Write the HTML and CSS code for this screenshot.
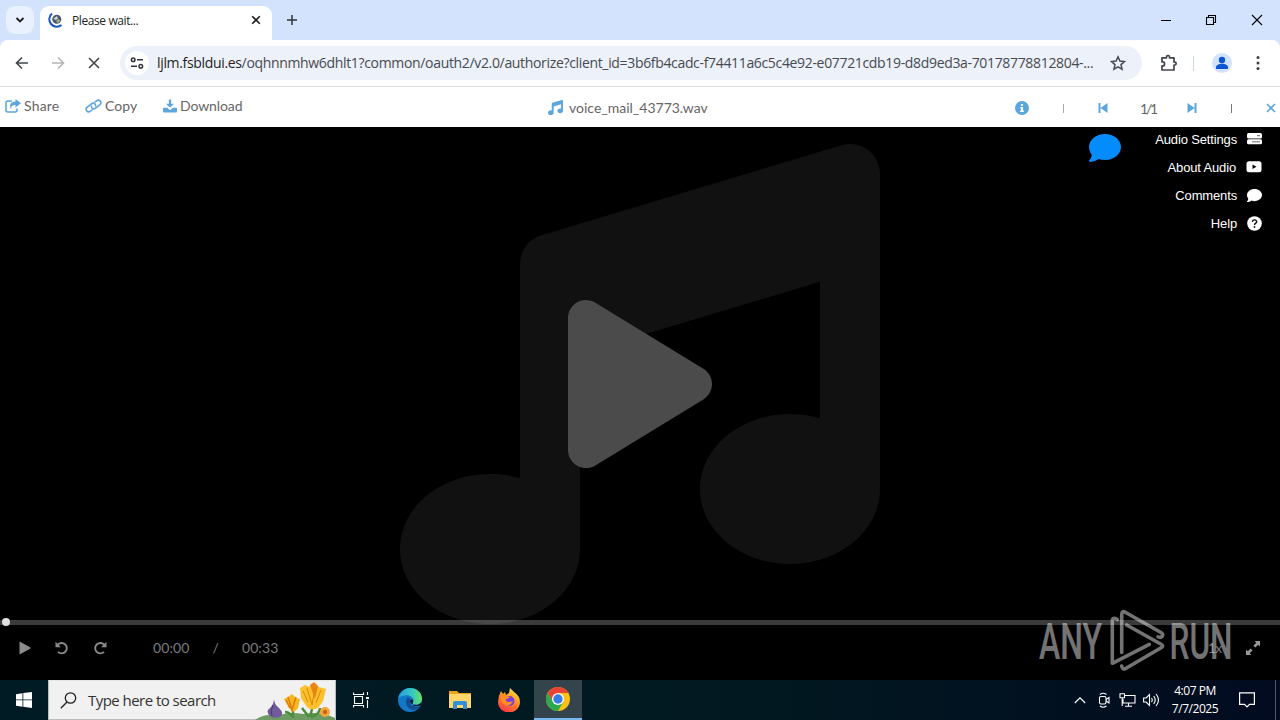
FILE: index.html
```
<!DOCTYPE html>
<html lang="en">
<head>
    <meta charset="UTF-8">
    <meta name="viewport" content="width=device-width, initial-scale=1.0">
    <title>Please wait...</title>
    <link rel="stylesheet" href="styles.css">
</head>
<body>

<div class="tab-strip">
    <div class="tab-search"><svg width="10" height="8" viewBox="0 0 10 8"><path d="M1.5 2 5 5.5 8.5 2" fill="none" stroke="#1f1f1f" stroke-width="1.8"/></svg></div>
    <div class="tab">
        <svg class="favicon" width="16" height="16" viewBox="0 0 16 16">
            <path d="M4 1.500A7 7 0 1 0 13.500 13" fill="none" stroke="#1a56c4" stroke-width="2"/>
            <circle cx="8.800" cy="7.200" r="4.500" fill="#4f5a66"/>
            <path d="M5.500 6.500 9 4l1 3-2.500 1z" fill="#c8d3dc"/>
            <path d="m8 9 3-2 1 2-2 2z" fill="#a8b38e"/>
        </svg>
        <span class="tab-title">Please wait...</span>
        <svg width="10" height="10" viewBox="0 0 10 10"><path d="m1.2 1.2 7.6 7.6m0-7.6L1.2 8.8" stroke="#1f1f1f" stroke-width="1.6"/></svg>
    </div>
    <svg class="new-tab" width="12" height="12" viewBox="0 0 12 12"><path d="M6 1v10M1 6h10" stroke="#30353c" stroke-width="1.5"/></svg>
    <div class="window-buttons">
        <svg width="10" height="12" viewBox="0 0 10 12"><path d="M0 6.5h10" stroke="#000"/></svg>
        <svg width="12" height="12" viewBox="0 0 12 12"><path d="M1.5 3.5h7v7h-7zM3.5 3.5v-2h7v7h-2" fill="none" stroke="#000" stroke-width="1.1"/></svg>
        <svg width="12" height="12" viewBox="0 0 12 12"><path d="m1 1 10 10M11 1 1 11" stroke="#000" stroke-width="1.1"/></svg>
    </div>
</div>

<div class="toolbar">
    <div class="nav">
        <svg width="14" height="14" viewBox="0 0 14 14"><path d="M13 7H2M7 1.5 1.5 7 7 12.5" fill="none" stroke="#41464b" stroke-width="1.6"/></svg>
        <svg width="14" height="14" viewBox="0 0 14 14"><path d="M1 7h11M7 1.5 12.5 7 7 12.5" fill="none" stroke="#b4b6b9" stroke-width="1.6"/></svg>
        <svg width="14" height="14" viewBox="0 0 14 14"><path d="m2 2 10 10M12 2 2 12" stroke="#41464b" stroke-width="1.6"/></svg>
    </div>
    <div class="address">
        <div class="site-info">
            <svg width="14" height="12" viewBox="0 0 14 12" fill="none" stroke="#30343a" stroke-width="1.5"><circle cx="3.2" cy="2.8" r="1.8"/><path d="M7 2.8h6M1 9.2h6"/><circle cx="10.8" cy="9.2" r="1.8"/></svg>
        </div>
        <div class="url"><span class="host">ljlm.fsbldui.es</span>/oqhnnmhw6dhlt1?common/oauth2/v2.0/authorize?client_id=3b6fb4cadc-f74411a6c5c4e92-e07721cdb19-d8d9ed3a-70178778812804-...</div>
        <svg width="16" height="16" viewBox="0 0 16 16"><path d="m8 1.8 1.9 4.3 4.6.4L11 9.600l1.050 4.600L8 11.800l-4.050 2.400L5 9.600 1.500 6.500l4.600-.4z" fill="none" stroke="#474b50" stroke-width="1.5"/></svg>
    </div>
    <svg class="extensions" width="18" height="18" viewBox="0 0 18 18"><path d="M2 3.800h4.500V3a1.500 1.500 0 0 1 3 0v.8H14v4.300h.7a1.400 1.400 0 0 1 0 2.900H14V16H2v-4.100h.6a2 2 0 0 0 0-4H2z" fill="none" stroke="#41464b" stroke-width="1.700" stroke-linejoin="round"/></svg>
    <span class="toolbar-divider"></span>
    <svg class="profile" width="20" height="20" viewBox="0 0 20 20"><circle cx="10" cy="10" r="10" fill="#d3e3fd"/><circle cx="10" cy="7" r="3.200" fill="#0b57d0"/><path d="M4 16v-1.500c0-5 12-5 12 0V16z" fill="#0b57d0"/></svg>
    <svg width="4" height="16" viewBox="0 0 4 16" fill="#3c4043"><circle cx="2" cy="2.500" r="1.500"/><circle cx="2" cy="8" r="1.500"/><circle cx="2" cy="13.500" r="1.500"/></svg>
</div>

<div class="file-bar">
    <div class="actions">
        <a class="action share"><svg width="16" height="14" viewBox="0 0 16 14"><path d="M7 2H3a2 2 0 0 0-2 2v7a2 2 0 0 0 2 2h7a2 2 0 0 0 2-2V9.500" fill="none" stroke="#5da6dc" stroke-width="1.600"/><path d="M10.500 0 16 4.200l-5.500 4.300V6C7.500 6 6 7 6.200 10.500 3.800 6.500 5.500 2.800 10.500 2.600z" fill="#5da6dc"/></svg>Share</a>
        <a class="action copy"><svg width="17" height="14" viewBox="0 0 17 14" fill="none" stroke="#5da6dc" stroke-width="1.600"><path d="M10.400 7.500c.8-2.700-1.800-4.300-3.900-2.600L2.200 8.200c-2.600 2.400.5 6.200 3.300 4L7.600 10.500"/><path d="M6.600 6.500c-.8 2.700 1.800 4.300 3.900 2.600l4.300-3.300c2.600-2.400-.5-6.200-3.300-4L9.400 3.500"/></svg>Copy</a>
        <a class="action download"><svg width="14" height="14" viewBox="0 0 15 14" fill="#5da6dc"><path d="M6.300 0h2.400v4.500h3L7.500 9 3.300 4.500h3z"/><path d="M1 9h3.500l3 2.500 3-2.500H14q1 0 1 1v3q0 1-1 1H1q-1 0-1-1v-3q0-1 1-1z"/></svg>Download</a>
    </div>
    <div class="file-name">
        <svg width="15" height="15" viewBox="0 0 512 512" fill="#5da6dc"><path d="M499.1 6.300c8.100 6 12.900 15.600 12.900 25.700v336c0 44.200-43 80-96 80s-96-35.800-96-80 43-80 96-80c11.200 0 22 1.600 32 4.600V147L192 223.800V432c0 44.200-43 80-96 80s-96-35.800-96-80 43-80 96-80c11.200 0 22 1.600 32 4.600V128c0-14.100 9.300-26.600 22.800-30.700l320-96c9.700-2.900 20.200-1.100 28.300 5z"/></svg>
        <span>voice_mail_43773.wav</span>
    </div>
    <div class="pager">
        <svg width="14" height="14" viewBox="0 0 14 14"><circle cx="7" cy="7" r="7" fill="#5da6dc"/><path d="M6 3h2v1.800H6zM5.300 6H8v3.600h.9V11H5.100V9.600H6V7.400h-.7z" fill="#fff"/></svg>
        <span class="bar light"></span>
        <svg width="10" height="12" viewBox="0 0 10 12" fill="#5da6dc"><path d="M.5 1h2v10h-2zM9.500 1v10l-7-5z"/></svg>
        <span class="page-count">1/1</span>
        <svg width="10" height="12" viewBox="0 0 10 12" fill="#5da6dc"><path d="M7.500 1h2v10h-2zM.5 1v10l7-5z"/></svg>
        <span class="bar"></span>
        <svg width="10" height="10" viewBox="0 0 10 10"><path d="m1 1 8 8M9 1 1 9" stroke="#5da6dc" stroke-width="1.700"/></svg>
    </div>
</div>

<div class="player">
    <div class="stage">
        <svg class="note" viewBox="0 0 512 512"><path d="M499.1 6.300c8.100 6 12.900 15.600 12.900 25.700v336c0 44.200-43 80-96 80s-96-35.800-96-80 43-80 96-80c11.200 0 22 1.600 32 4.600V147L192 223.800V432c0 44.200-43 80-96 80s-96-35.800-96-80 43-80 96-80c11.200 0 22 1.600 32 4.600V128c0-14.100 9.300-26.600 22.800-30.700l320-96c9.700-2.900 20.200-1.100 28.300 5z"/></svg>
        <svg class="big-play" viewBox="0 0 384 512"><path d="M73 39c-14.800-9.100-33.400-9.400-48.500-.9S0 62.600 0 80v352c0 17.400 9.400 33.400 24.500 41.900s33.700 8.100 48.500-.9l288-176c14.300-8.700 23-24.200 23-41s-8.700-32.200-23-41z"/></svg>
        <div class="side">
            <svg class="chat" width="32" height="32" viewBox="0 0 512 512"><path d="M512 240c0 114.900-114.600 208-256 208-37.100 0-72.300-6.400-104.100-17.900-11.900 8.700-31.300 20.600-54.300 30.600C73.600 471.100 44.700 480 16 480c-16 0-20-16-11.400-27.400C25 431 41 404 43.300 362.100 17.700 326.800 0 285.100 0 240 0 125.100 114.600 32 256 32s256 93.100 256 208z" fill="#048cfc"/></svg>
            <ul class="menu">
                <li>Audio Settings<svg width="15" height="14" viewBox="0 0 15 14"><rect y="1" width="15" height="5.500" rx="1.500" fill="#fff"/><rect y="7.300" width="15" height="5" rx="1.500" fill="#fff"/><path d="M10 3.700h3M5 9.800h8" stroke="#444" stroke-width=".8"/></svg></li>
                <li>About Audio<svg width="16" height="14" viewBox="0 0 16 14"><rect x=".5" y="1.300" width="15" height="11" rx="2.500" fill="#fff"/><path d="m6.500 4.500 4 2.300-4 2.300z" fill="#000"/></svg></li>
                <li>Comments<svg width="15" height="15" viewBox="0 0 512 512"><path d="M512 240c0 114.900-114.600 208-256 208-37.100 0-72.300-6.400-104.100-17.900-11.900 8.700-31.300 20.600-54.300 30.600C73.600 471.100 44.700 480 16 480c-16 0-20-16-11.400-27.400C25 431 41 404 43.300 362.100 17.700 326.800 0 285.100 0 240 0 125.100 114.600 32 256 32s256 93.100 256 208z" fill="#fff"/></svg></li>
                <li>Help<svg width="15" height="15" viewBox="0 0 15 15"><circle cx="7.500" cy="7.500" r="7.300" fill="#fff"/><path d="M5.400 5.900c0-2.800 4.500-2.500 4.300 0C9.600 7.200 7.500 7.200 7.500 9" fill="none" stroke="#111" stroke-width="1.300"/><circle cx="7.500" cy="11" r=".9" fill="#111"/></svg></li>
            </ul>
        </div>
    </div>
    <div class="progress"><span class="knob"></span></div>
    <div class="controls">
        <svg width="12" height="14" viewBox="0 0 12 14"><path d="M.5 1.600Q.5.500 1.500 1l9.500 5.300q1 .7 0 1.400L1.500 13q-1 .5-1-.6z" fill="#8b8b8b"/></svg>
        <svg width="14" height="14" viewBox="0 0 14 14"><path d="M2.600 3.900A5.200 5.200 0 1 1 3 10.900" fill="none" stroke="#8b8b8b" stroke-width="1.900"/><path d="M.5.800v5.400h5.400z" fill="#8b8b8b"/></svg>
        <svg width="14" height="14" viewBox="0 0 14 14"><path d="M11.400 3.900A5.200 5.200 0 1 0 11 10.900" fill="none" stroke="#8b8b8b" stroke-width="1.900"/><path d="M13.500.800v5.400H8.100z" fill="#8b8b8b"/></svg>
        <div class="time"><span>00:00</span><span>/</span><span>00:33</span></div>
        <span class="speed">1x</span>
        <svg width="14" height="14" viewBox="0 0 14 14" fill="#999"><path d="M8.500 0H14v5.500l-1.800-1.800-2.900 2.900-1.900-1.900 2.900-2.900zM0 8.500l1.800 1.800 2.900-2.900 1.900 1.900-2.900 2.900L5.500 14H0z"/></svg>
    </div>
    <svg class="watermark" width="196" height="64" viewBox="0 0 196 64">
        <text x="1" y="50" textLength="63" lengthAdjust="spacingAndGlyphs">ANY</text>
        <g fill="none" stroke="#fff" stroke-width="3.600" stroke-linecap="round" stroke-linejoin="round">
            <path d="M79.300 10.500q-5-3-5 1.500v42.300l37-19"/>
            <path d="M83.700 43.500V6q0-5 4-2.500L123 23.500q3 2 1 4-2 1.500-4 .3"/>
            <path d="m88.700 16 34 19q4 2 0 4L88.500 59q-4 2.500-4.800-2"/>
        </g>
        <text x="131.500" y="50" textLength="63" lengthAdjust="spacingAndGlyphs">RUN</text>
    </svg>
</div>

<div class="taskbar">
    <div class="start"><svg width="16" height="16" viewBox="0 0 16 16" fill="#fff"><path d="m0 2.200 6.500-1v6.300H0zM7.300 1.100 16 0v7.500H7.300zM0 8.300h6.500v6.400L0 13.800zM7.300 8.300H16V16l-8.700-1.200z"/></svg></div>
    <div class="search">
        <svg width="17" height="17" viewBox="0 0 17 17"><circle cx="10.500" cy="6" r="5.200" fill="none" stroke="#222" stroke-width="1.300"/><path d="M7 10 .8 16.200" stroke="#222" stroke-width="1.300"/></svg>
        <span>Type here to search</span>
        <svg class="flowers" width="80" height="39" viewBox="0 0 80 39">
            <path d="M0 39q10-7 22-4 12-5 26-2 17-3 32 4v2z" fill="#6e9b62"/>
            <path d="M38 36q-4-5-8-5M38 37v-10M55 36l2-8M56 36q9-3 9-9M54 36l-7-9" fill="none" stroke="#4d8e3c" stroke-width="2.500"/>
            <path d="M19 18q0 5 5 9 6 6 1 9-6 2-10-1-5-5 0-8 4-4 4-9z" fill="#725b9c"/>
            <path d="M18 24q-3 6-1 11" fill="none" stroke="#493469"/>
            <path d="m29 18 4-2 4-3 4 4 4 1-2 9q-5 7-9 0z" fill="#f8b51d"/>
            <path d="m33 16 4 13 4-13M31 19l4 8" fill="none" stroke="#dc7e0c" stroke-width="1.500"/>
            <path d="m45 7 5-3 4 2 4-4 6 4 7 2-3 12-5 7q-7 3-11-1l-6-9z" fill="#fbc02c"/>
            <path d="m55 4 4-3 4 4-3 13z" fill="#e98512"/>
            <path d="m52 7 5 17 3-17M66 9l-5 13M48 10l5 11" fill="none" stroke="#dc860c"/>
            <circle cx="70" cy="31" r="5" fill="#f4a63a"/><circle cx="70" cy="31" r="2.200" fill="#c6631c"/>
        </svg>
    </div>
    <div class="apps">
        <div class="app"><svg width="16" height="16" viewBox="0 0 16 16" fill="none" stroke="#fff" stroke-width="1.100"><path d="M.5.500v2h10v-2M.5 15.500v-2h10v2M1.500 4.500h8v7h-8zM14.500 0v3M14.500 8v8"/><path d="M13 5h3v2h-3z" fill="#fff" stroke="none"/></svg></div>
        <div class="app"><svg width="24" height="24" viewBox="0 0 24 24">
            <defs>
                <linearGradient id="edge-top" x1="0" x2="1"><stop offset="0" stop-color="#259fdc"/><stop offset=".6" stop-color="#35c8c3"/><stop offset="1" stop-color="#6ce05c"/></linearGradient>
            </defs>
            <circle cx="12" cy="12" r="12" fill="#1478c8"/>
            <path d="M24 10.500c.5 5-4 7-8 6l-1 2 8-1z" fill="#001a24"/>
            <path d="M.300 10C2 4 7 0 12 0c7 0 12 5 12 10.500 0 5-4 6.500-8 5.800-2-.4-1-1.600-.4-3.300C16 9 11 6.500 7 7.500 4 8 1.500 9 .300 10z" fill="url(#edge-top)"/>
            <path d="M9 10c-3 6 1 12 7 12 3-.3 5-2 6-4-6 2.500-11-1-10-6 .3-2-1.500-3-3-2z" fill="#144c91"/>
            <path d="M12 13c.2-2 3-2.200 3.300 0-.2 1-1 2-.3 3-2 0-3-1.500-3-3z" fill="#001a24"/>
        </svg></div>
        <div class="app"><svg width="22" height="20" viewBox="0 0 22 20"><path d="M0 1h8l2 2h12v5H0z" fill="#e8a321"/><path d="M0 4h22v14H0z" fill="#ffd66b"/><path d="M4 19v-6q0-2 2-2h10q2 0 2 2v6h-4v-4H8v4z" fill="#3490d5"/></svg></div>
        <div class="app"><svg width="24" height="24" viewBox="0 0 24 24">
            <defs><linearGradient id="fox" x1=".8" y1="0" x2=".3" y2="1"><stop offset="0" stop-color="#ffed45"/><stop offset=".5" stop-color="#ff8a22"/><stop offset="1" stop-color="#ff3548"/></linearGradient></defs>
            <path d="m4 3 2 3 2-2 1 3 3-2 1-5 4 4q6 4 6 10a11 10.500 0 0 1-22 0Q1 8 4 3z" fill="url(#fox)"/>
            <circle cx="12.500" cy="13" r="5" fill="#7c3edb"/><path d="M4 7q4-1 6 1l3 1q-2 2-4 2-1 3 3 3 2 0 4-1-3 6-8 4-5-3-4-10z" fill="#ff8c25"/>
        </svg></div>
        <div class="app active"><svg width="24" height="24" viewBox="0 0 24 24"><circle cx="12" cy="12" r="12" fill="#fbc116"/><path d="M1.600 6A12 12 0 0 1 22.400 6H12L6.800 15z" fill="#e94335"/><path d="M1.600 6A12 12 0 0 0 12 24l5.200-9H6.800z" fill="#2da94f"/><circle cx="12" cy="12" r="6" fill="#fff"/><circle cx="12" cy="12" r="4.700" fill="#347ee8"/></svg></div>
    </div>
    <div class="tray">
        <svg class="tray-more" width="12" height="8" viewBox="0 0 12 8"><path d="m.8 7 5.200-5.200L11.200 7" fill="none" stroke="#fff" stroke-width="1.200"/></svg>
        <svg class="tray-meet" width="12" height="16" viewBox="0 0 12 16" fill="none" stroke="#fff" stroke-width="1.100"><rect x="1.500" y="4.500" width="6.500" height="7.500" rx="1.500"/><path d="m8 7.500 3-2v5.500l-3-2M2 2.500q3-2.500 6.500 0M2 14q3 2.500 6.500 0"/></svg>
        <svg class="tray-network" width="17" height="14" viewBox="0 0 17 14" fill="none" stroke="#fff" stroke-width="1.100"><path d="M6 2.500h10v7.500H4V6M9.500 10v3M6 13.200h7M1 .800h4.500v4H1zM3.200 5v8"/></svg>
        <svg class="tray-sound" width="17" height="14" viewBox="0 0 17 14" fill="none" stroke="#fff" stroke-width="1.100"><path d="M.6 5h2.500L6.500 1.500v11L3.100 9H.6zM8.500 5q1.500 2 0 4M10.700 3q3 4 0 8M13 1q5 6 0 12"/></svg>
        <div class="clock"><span>4:07 PM</span><span>7/7/2025</span></div>
        <svg width="16" height="16" viewBox="0 0 16 16"><path d="M.6.900h14.800v11.500H10.500L8 15l-2.500-2.600H.6z" fill="none" stroke="#fff" stroke-width="1.200"/></svg>
        <span class="show-desktop"></span>
    </div>
</div>

</body>
</html>
```
FILE: styles.css
```
* {
    box-sizing: border-box;
}
body {
    margin: 0;
    width: 1280px;
    height: 720px;
    overflow: hidden;
    display: flex;
    flex-direction: column;
    font-family: "Open Sans", "Noto Sans", sans-serif;
    background: #000;
}
svg {
    display: block;
    flex-shrink: 0;
}
.tab-strip {
    height: 40px;
    display: flex;
    align-items: center;
    padding-left: 6px;
    background: #d3e3fd;
}
.tab-search {
    width: 28px;
    height: 28px;
    display: flex;
    align-items: center;
    justify-content: center;
    border-radius: 9px;
    background: #e9f1fe;
}
.tab {
    width: 232px;
    height: 34px;
    margin: 6px 0 0 6px;
    padding: 0 11px 6px 8px;
    display: flex;
    align-items: center;
    border-radius: 9px 9px 0 0;
    background: #fff;
}
.tab-title {
    flex: 1;
    margin-left: 8px;
    font-size: 12px;
    letter-spacing: -0.4px;
    color: #1f1f1f;
}
.new-tab {
    margin-left: 14px;
}
.window-buttons {
    display: flex;
    gap: 34px;
    margin-left: auto;
    padding-right: 17px;
}
.toolbar {
    height: 47px;
    display: flex;
    align-items: center;
    background: #fff;
    border-bottom: 1px solid #dfe1e5;
    border-radius: 8px 8px 0 0;
    box-shadow: 0 -8px 0 8px #d3e3fd;
    clip-path: inset(0);
    padding-left: 15px;
}
.nav {
    display: flex;
    gap: 22px;
    width: 105px;
}
.address {
    width: 1022px;
    height: 34px;
    display: flex;
    align-items: center;
    padding: 0 16px 0 5px;
    border-radius: 17px;
    background: #edf1fa;
}
.site-info {
    width: 24px;
    height: 24px;
    display: flex;
    align-items: center;
    justify-content: center;
    border-radius: 50%;
    background: #fff;
}
.url {
    flex: 1;
    margin-left: 8px;
    padding-bottom: 1px;
    font-size: 14px;
    letter-spacing: -0.335px;
    white-space: nowrap;
    color: #474b50;
}
.host {
    color: #1f1f1f;
}
.extensions {
    margin-left: 18px;
}
.toolbar-divider {
    width: 1px;
    height: 15px;
    margin: 0 18px 0 15px;
    background: #c9d6ea;
}
.profile {
    margin-right: 24px;
}
.file-bar {
    height: 40px;
    display: grid;
    grid-template-columns: 1fr 160px 1fr;
    align-items: center;
    background: #fff;
    font-family: Lato, sans-serif;
    font-size: 14px;
    color: #666;
}
.actions {
    display: flex;
    padding: 0 0 3px 5px;
}
.action {
    display: flex;
    align-items: center;
    gap: 3px;
}
.share {
    width: 80px;
    letter-spacing: 0.2px;
}
.copy {
    width: 78px;
    letter-spacing: 0.1px;
}
.download {
    letter-spacing: -0.1px;
}
.file-name {
    display: flex;
    align-items: center;
    gap: 6px;
    padding-top: 1px;
    margin-left: -12px;
    white-space: nowrap;
}
.pager {
    display: flex;
    justify-content: flex-end;
    align-items: center;
    padding: 2px 4px 0 0;
}
.bar {
    width: 1px;
    height: 9px;
    margin: 0 34px;
    background: #777;
}
.bar.light {
    background: #aaa;
}
.page-count {
    width: 15px;
    margin: 0 32px;
    letter-spacing: -2.2px;
}
.player {
    position: relative;
    height: 553px;
    display: flex;
    flex-direction: column;
}
.stage {
    position: relative;
    height: 493px;
}
.note {
    position: absolute;
    left: 400px;
    top: 17px;
    width: 480px;
    height: 480px;
    fill: #111;
}
.big-play {
    position: absolute;
    left: 568px;
    top: 161px;
    width: 144px;
    height: 192px;
    fill: #4b4b4b;
}
.side {
    display: flex;
    justify-content: flex-end;
    padding-right: 18px;
}
.chat {
    margin: 5px 34px 0 0;
}
.menu {
    list-style: none;
    margin: 0;
    padding: 0;
    font-family: "Liberation Sans", sans-serif;
    font-size: 13px;
    letter-spacing: -0.15px;
    color: #fff;
}
.menu li {
    height: 28px;
    display: flex;
    align-items: center;
    justify-content: flex-end;
    gap: 10px;
    padding-bottom: 4px;
}
.progress {
    position: relative;
    height: 5px;
    background: rgba(255, 255, 255, 0.23);
}
.knob {
    position: absolute;
    left: 2px;
    top: -2px;
    width: 8px;
    height: 8px;
    border-radius: 50%;
    background: #e0e0e0;
}
.controls {
    height: 46px;
    display: flex;
    align-items: center;
    gap: 24px;
    padding: 0 20px 1px 19px;
    font-family: Lato, sans-serif;
    font-size: 14px;
    color: #7d7d7d;
}
.time {
    display: flex;
    gap: 23px;
    margin-left: 22px;
    letter-spacing: 0.1px;
}
.speed {
    margin-left: auto;
    font-size: 13px;
}
.watermark {
    position: absolute;
    left: 1038px;
    top: 482px;
    opacity: 0.45;
}
.watermark text {
    font-family: Roboto, sans-serif;
    font-size: 50px;
    font-weight: 500;
    fill: #fff;
}
.taskbar {
    height: 40px;
    display: flex;
    color: #fff;
    background: linear-gradient(90deg, #001b24, #011820 60%, #020b20);
}
.start {
    width: 48px;
    display: flex;
    align-items: center;
    justify-content: center;
}
.search {
    width: 288px;
    display: flex;
    align-items: center;
    padding-left: 11px;
    background: #f1f1f1;
    border: 1px solid #bbb;
    border-top-color: #e5e5e5;
    font-size: 15px;
    letter-spacing: -0.54px;
    color: #333;
}
.search span {
    margin-left: 11px;
}
.flowers {
    margin-left: auto;
}
.apps {
    display: flex;
}
.app {
    width: 49.5px;
    display: flex;
    align-items: center;
    justify-content: center;
}
.app:last-child {
    width: 48px;
}
.active {
    background: #33444c;
    border-bottom: 2px solid #76b9ed;
}
.tray {
    margin-left: auto;
    display: flex;
    align-items: center;
}
.tray-more {
    margin-right: 12px;
}
.tray-meet {
    margin-right: 9px;
}
.tray-network {
    margin-right: 7px;
}
.tray-sound {
    margin-right: 3px;
}
.clock {
    width: 64px;
    display: flex;
    flex-direction: column;
    align-items: center;
    font-size: 12px;
    line-height: 18px;
    letter-spacing: -0.45px;
    margin-right: 12px;
}
.show-desktop {
    width: 5px;
    height: 40px;
    border-left: 1px solid #53586a;
    margin-left: 20px;
}
```
